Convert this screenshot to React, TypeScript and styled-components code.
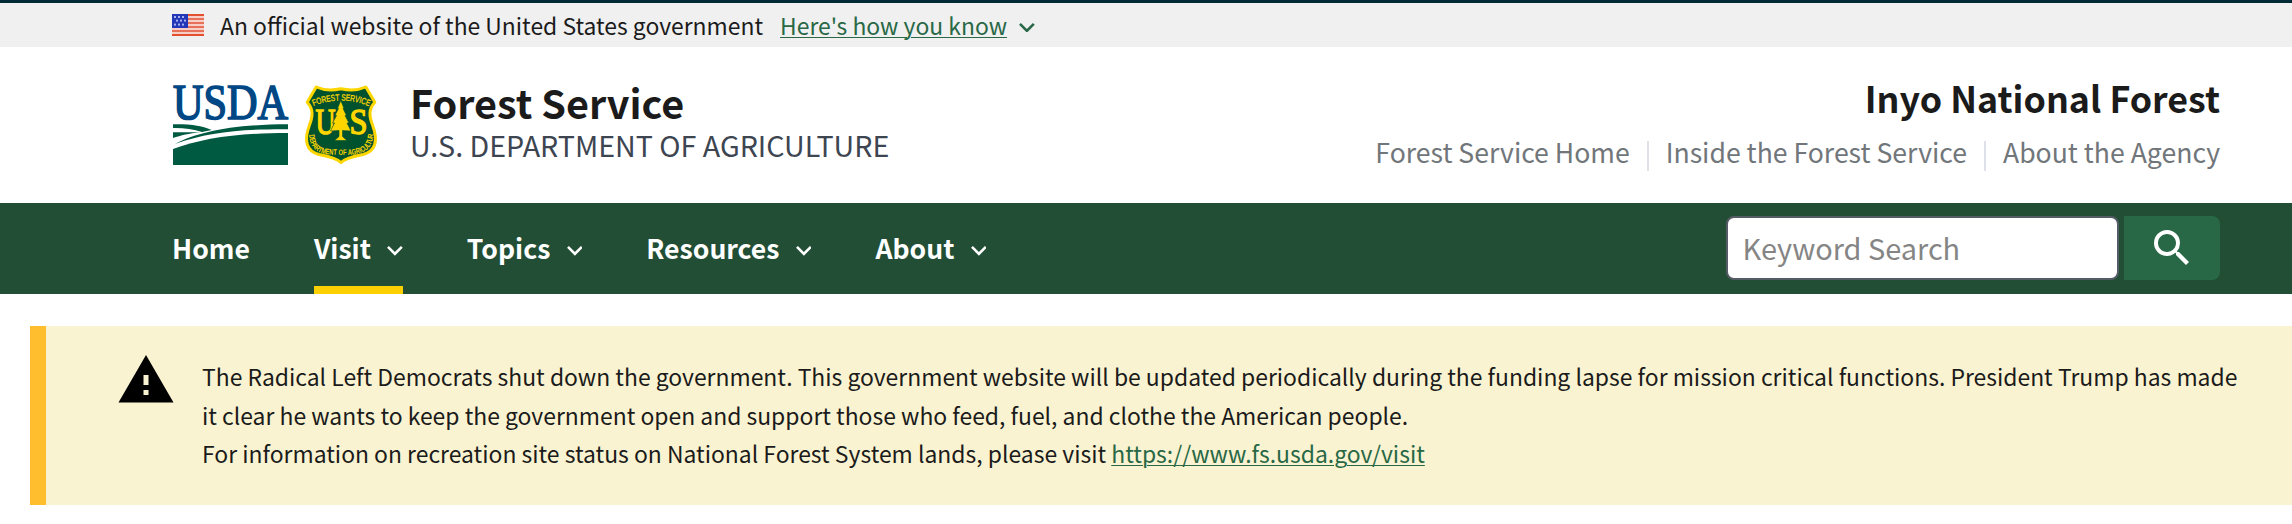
import React from 'react';
import styled, { createGlobalStyle } from 'styled-components';

const Global = createGlobalStyle`
  *, *::before, *::after { box-sizing: border-box; }
  body {
    margin: 0;
    background: #fff;
    color: #1b1b1b;
    font-family: "Noto Sans CJK SC", "Noto Sans", sans-serif;
    font-size: 22.9px;
  }
`;

const Page = styled.div`
  min-width: 2292px;
`;

/* Government banner */
const Banner = styled.div`
  display: flex;
  align-items: center;
  height: 47px;
  padding: 0 172px;
  border-top: 3px solid #002b36;
  background: #f0f0f0;
  line-height: 32px;
  white-space: nowrap;
`;

const Flag = styled.svg`
  display: block;
  width: 32px;
  height: 22px;
  margin-right: 16px;
`;

const Link = styled.a`
  color: #286846;
  text-decoration: underline;
  text-decoration-thickness: 1px;
  text-underline-offset: 2px;
`;

const BannerLink = styled(Link)`
  margin-left: 17px;
`;

const Chevron = styled.svg<{ $gap: number; $drop: number }>`
  display: block;
  width: 15.8px;
  height: 9.7px;
  margin-left: ${(p) => p.$gap}px;
  margin-top: ${(p) => p.$drop}px;
  fill: currentColor;
`;

const BannerChevron = styled(Chevron)`
  color: #286846;
`;

/* Agency header */
const Header = styled.header`
  display: flex;
  justify-content: space-between;
  height: 156px;
  padding: 0 72px 0 172px;
  white-space: nowrap;
`;

const Brand = styled.div`
  display: flex;
  padding-top: 38px;
`;

const UsdaLogo = styled.svg`
  display: block;
  width: 116px;
  height: 80px;
  margin-left: 1px;
  overflow: visible;
`;

const Shield = styled.svg`
  display: block;
  width: 74px;
  height: 80px;
  margin-left: 15px;
  overflow: visible;
`;

const BrandText = styled.div`
  margin: -5px 0 0 32px;
`;

const Agency = styled.div`
  font-size: 39.6px;
  font-weight: 700;
  line-height: 44px;
`;

const Department = styled.div`
  margin-top: 3px;
  color: #3d4551;
  font-size: 28.65px;
  line-height: 36px;
`;

const SiteInfo = styled.div`
  display: flex;
  flex-direction: column;
  align-items: flex-end;
  padding-top: 25px;
`;

const SiteName = styled.div`
  font-size: 35.8px;
  font-weight: 700;
  line-height: 50px;
`;

const Secondary = styled.nav`
  display: flex;
  margin-top: 13px;
  color: #71767a;
  font-size: 26.6px;
  line-height: 34px;
`;

const Divider = styled.span`
  width: 2px;
  height: 30px;
  margin: 6px 17px 0;
  background: #dfe1ea;
`;

/* Main navigation */
const NavBar = styled.div`
  display: flex;
  justify-content: space-between;
  height: 91px;
  padding: 0 72px 0 172px;
  background: #214e35;
`;

const Menu = styled.nav`
  display: flex;
  gap: 64px;
`;

const MenuItem = styled.a<{ $active?: boolean }>`
  display: flex;
  align-items: center;
  padding-bottom: 2px;
  color: #fff;
  font-size: 26.6px;
  font-weight: 700;
  box-shadow: ${(p) => (p.$active ? 'inset 0 -8px 0 #fccf00' : 'none')};
`;

const Search = styled.form`
  display: flex;
  gap: 5px;
  height: 64px;
  margin-top: 13px;
`;

const SearchInput = styled.input`
  width: 393px;
  height: 64px;
  padding: 0 14.5px 2px;
  border: 2px solid #565c65;
  border-radius: 8px;
  background: #fff;
  color: #1b1b1b;
  font-family: inherit;
  font-size: 28.9px;
  &::placeholder { color: #858585; opacity: 1; }
`;

const SearchButton = styled.button`
  display: flex;
  align-items: center;
  justify-content: center;
  width: 96px;
  height: 64px;
  padding: 0;
  border: 0;
  border-radius: 0 8px 8px 0;
  background: #286846;
  color: #fff;
`;

/* Alert */
const Alert = styled.section`
  display: flex;
  align-items: flex-start;
  height: 179px;
  margin: 32px 0 0 30px;
  padding: 24px 46px 0 70px;
  border-left: 16px solid #ffbe2e;
  background: #faf3d1;
`;

const WarningIcon = styled.svg`
  display: block;
  flex: none;
  width: 60px;
  height: 60px;
  fill: #000;
`;

const AlertText = styled.p`
  margin: 7px 0 0 26px;
  font-size: 22.92px;
  line-height: 38.7px;
  white-space: nowrap;
`;

const CHEVRON = 'M16.59 8.59 12 13.17 7.41 8.59 6 10l6 6 6-6z';

const MENU = [
  { label: 'Home', sub: false, active: false },
  { label: 'Visit', sub: true, active: true },
  { label: 'Topics', sub: true, active: false },
  { label: 'Resources', sub: true, active: false },
  { label: 'About', sub: true, active: false },
];

const STARS = [
  [1.5, 1.5], [3.5, 1.5], [5.5, 1.5],
  [2.5, 3.3], [4.5, 3.3], [6.5, 3.3],
  [1.5, 5.3], [3.5, 5.3], [5.5, 5.3],
];

function UsFlag() {
  return (
    <Flag viewBox="0 0 16 11" aria-label="U.S. flag">
      <rect width="16" height="11" fill="#f8cfc6" />
      {[0, 2, 4, 6, 8, 10].map((y) => (
        <rect key={y} y={y} width="16" height="1" fill={y === 0 || y === 10 ? '#e2502f' : '#e7705a'} />
      ))}
      <rect width="8" height="7" fill="#2338b8" />
      {STARS.map(([x, y]) => (
        <rect key={`${x}-${y}`} x={x - 0.5} y={y - 0.5} width="1" height="1" fill="#a9b2ea" />
      ))}
    </Flag>
  );
}

function Usda() {
  return (
    <UsdaLogo viewBox="0 0 116 80" aria-label="USDA">
      <text
        x="0"
        y="34.2"
        textLength="115"
        lengthAdjust="spacingAndGlyphs"
        fontFamily="Liberation Serif, serif"
        fontSize="50"
        fill="#004785"
        stroke="#004785"
        strokeWidth="1.7"
      >
        USDA
      </text>
      <g fill="#005941">
        <path d="M0 39.3C18 39 30 41 38.7 45L29 47C20 43.8 10 42.8 0 43Z" />
        <path d="M0 47.3 27 47.3C16 48.5 8 50.5 0 53Z" />
        <path d="M2 59C25 47 60 39.5 115 39.3V44.3C70 44 35 47 2 59Z" />
        <path d="M0 64C30 53 65 48 115 48V80H0Z" />
      </g>
    </UsdaLogo>
  );
}

function ForestShield() {
  return (
    <Shield viewBox="0 0 74 80" aria-label="Forest Service shield">
      <defs>
        <path id="arcTop" d="M9.5 21Q37 10 64.5 21" />
        <path id="arcBottom" d="M5 49.5C6 69 20 70 37 70C54 70 68.5 69 69.5 48.5" />
      </defs>
      <path
        d="M12.2 2C20 5.5 29 5.5 37 3.8C45 5.5 54 5.5 61.8 2L70.8 17.2C64.5 24 65 31 68.5 40C74.5 56 71.5 66 59 69.5C49 71.5 41 73.5 37 77.5C33 73.5 25 71.5 15 69.5C2.500 66 -0.5 56 5.5 40C9 31 9.5 24 3.2 17.2Z"
        fill="#00512d"
        stroke="#fdd600"
        strokeWidth="3"
        strokeLinejoin="round"
      />
      <g fill="#fdd600" fontWeight="700">
        <text fontFamily="Liberation Sans, sans-serif" fontSize="9" fontWeight="400" stroke="#fdd600" strokeWidth="0.3">
          <textPath href="#arcTop" textLength="57" lengthAdjust="spacingAndGlyphs">FOREST SERVICE</textPath>
        </text>
        <text fontFamily="Liberation Sans, sans-serif" fontSize="8">
          <textPath href="#arcBottom" textLength="92" lengthAdjust="spacingAndGlyphs">DEPARTMENT OF AGRICULTURE</textPath>
        </text>
        <g fontFamily="Liberation Serif, serif" fontSize="36" fontWeight="400" stroke="#fdd600" strokeWidth="1.4">
          <text x="11.5" y="49" textLength="20" lengthAdjust="spacingAndGlyphs">U</text>
          <text x="45.5" y="49" textLength="18" lengthAdjust="spacingAndGlyphs">S</text>
        </g>
      </g>
      <path
        d="M36.8 15.500 40 23.5 39 23.5 42.5 30.5 41 30.5 45 38 43 38 47 46 38.5 45.5 38.5 51.5 43 55.5H30.5L35 51.5V45.5L26.5 46 30.5 38 28.5 38 32.5 30.5 31 30.5 34.5 23.5 33.5 23.5Z"
        fill="#fdd600"
        stroke="#00512d"
        strokeWidth="0.6"
      />
    </Shield>
  );
}

export default function App() {
  return (
    <Page>
      <Global />
      <Banner>
        <UsFlag />
        <span>An official website of the United States government</span>
        <BannerLink>Here's how you know</BannerLink>
        <BannerChevron $gap={12} $drop={5} viewBox="6 8.59 12 7.41">
          <path d={CHEVRON} />
        </BannerChevron>
      </Banner>

      <Header>
        <Brand>
          <Usda />
          <ForestShield />
          <BrandText>
            <Agency>Forest Service</Agency>
            <Department>U.S. DEPARTMENT OF AGRICULTURE</Department>
          </BrandText>
        </Brand>
        <SiteInfo>
          <SiteName>Inyo National Forest</SiteName>
          <Secondary>
            <span>Forest Service Home</span>
            <Divider />
            <span>Inside the Forest Service</span>
            <Divider />
            <span>About the Agency</span>
          </Secondary>
        </SiteInfo>
      </Header>

      <NavBar>
        <Menu>
          {MENU.map((item) => (
            <MenuItem key={item.label} $active={item.active}>
              {item.label}
              {item.sub && (
                <Chevron $gap={16.2} $drop={7} viewBox="6 8.59 12 7.41">
                  <path d={CHEVRON} />
                </Chevron>
              )}
            </MenuItem>
          ))}
        </Menu>
        <Search>
          <SearchInput placeholder="Keyword Search" />
          <SearchButton type="button" aria-label="Search">
            <svg width="48" height="48" viewBox="0 0 24 24" fill="currentColor">
              <path d="M15.5 14h-.79l-.28-.27A6.471 6.471 0 0 0 16 9.5 6.5 6.5 0 1 0 9.5 16c1.61 0 3.09-.59 4.23-1.57l.27.28v.79l5 4.99L20.49 19l-4.99-5zm-6 0C7.01 14 5 11.99 5 9.5S7.01 5 9.5 5 14 7.01 14 9.5 11.99 14 9.5 14z" />
            </svg>
          </SearchButton>
        </Search>
      </NavBar>

      <Alert>
        <WarningIcon viewBox="0 0 24 24">
          <path d="M1 21h22L12 2 1 21zm12-3h-2v-2h2v2zm0-4h-2v-4h2v4z" />
        </WarningIcon>
        <AlertText>
          The Radical Left Democrats shut down the government. This government website will be updated periodically
          during the funding lapse for mission critical functions. President Trump has made
          <br />
          it clear he wants to keep the government open and support those who feed, fuel, and clothe the American
          people.
          <br />
          For information on recreation site status on National Forest System lands, please visit{' '}
          <Link>https://www.fs.usda.gov/visit</Link>
        </AlertText>
      </Alert>
    </Page>
  );
}
